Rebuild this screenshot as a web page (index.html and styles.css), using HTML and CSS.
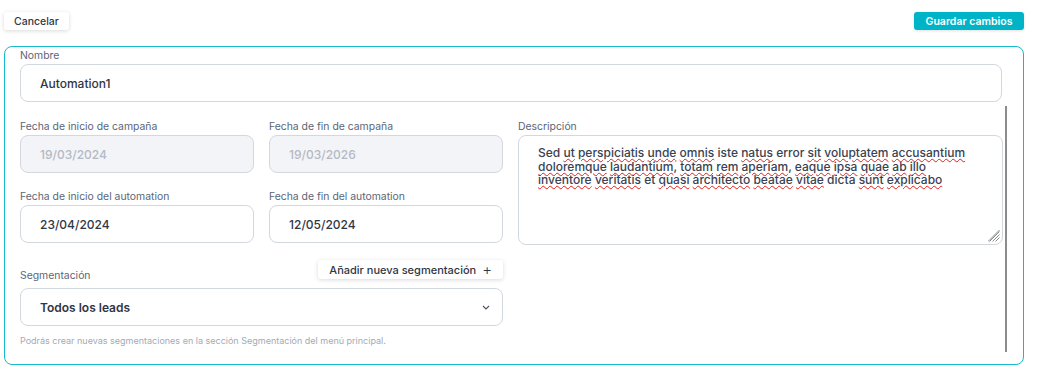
FILE: index.html
```html
<!DOCTYPE html>
<html lang="es">

<head>
    <meta charset="UTF-8">
    <meta name="viewport" content="width=device-width, initial-scale=1.0">
    <title>Editar automation</title>
    <link rel="stylesheet" href="styles.css">
</head>

<body>
    <div class="toolbar">
        <button type="button" class="btn-cancel">Cancelar</button>
        <button type="button" class="btn-save">Guardar cambios</button>
    </div>

    <div class="panel">
        <div class="field">
            <label class="label">Nombre</label>
            <div class="input">Automation1</div>
        </div>

        <div class="scroll-area">
            <div class="grid">
                <div class="left-col">
                    <div class="row">
                        <div class="field">
                            <label class="label">Fecha de inicio de campaña</label>
                            <div class="input disabled">19/03/2024</div>
                        </div>
                        <div class="field">
                            <label class="label">Fecha de fin de campaña</label>
                            <div class="input disabled">19/03/2026</div>
                        </div>
                    </div>
                    <div class="row">
                        <div class="field">
                            <label class="label">Fecha de inicio del automation</label>
                            <div class="input">23/04/2024</div>
                        </div>
                        <div class="field">
                            <label class="label">Fecha de fin del automation</label>
                            <div class="input">12/05/2024</div>
                        </div>
                    </div>
                    <div class="field seg-field">
                        <div class="seg-head">
                            <label class="label">Segmentación</label>
                            <button type="button" class="btn-add">Añadir nueva segmentación <span class="plus">+</span></button>
                        </div>
                        <div class="input select">
                            <span>Todos los leads</span>
                            <svg width="8" height="5" viewBox="0 0 8 5"><path d="M1 1l3 3 3-3" fill="none" stroke="#4a5262" stroke-width="1.1"/></svg>
                        </div>
                        <p class="hint">Podrás crear nuevas segmentaciones en la sección Segmentación del menú principal.</p>
                    </div>
                </div>

                <div class="field right-col">
                    <label class="label">Descripción</label>
                    <div class="textarea">
                        Sed <span class="sp">ut</span> <span class="sp">perspiciatis</span> <span class="sp">unde</span> <span class="sp">omnis</span> iste <span class="sp">natus</span> error <span class="sp">sit</span> <span class="sp">voluptatem</span> <span class="sp">accusantium</span><br>
                        <span class="sp">doloremque</span> <span class="sp">laudantium</span>, <span class="sp">totam</span> <span class="sp">rem</span> <span class="sp">aperiam</span>, <span class="sp">eaque</span> <span class="sp">ipsa</span> <span class="sp">quae</span> <span class="sp">ab</span> <span class="sp">illo</span><br>
                        <span class="sp">inventore</span> <span class="sp">veritatis</span> et <span class="sp">quasi</span> <span class="sp">architecto</span> <span class="sp">beatae</span> <span class="sp">vitae</span> dicta <span class="sp">sunt</span> <span class="sp">explicabo</span>
                        <svg class="grip" width="12" height="12" viewBox="0 0 12 12"><path d="M11.5 1.5L1.5 11.5M11.5 4.5L4.5 11.5M11.5 7.5L7.5 11.5M11.5 0L0 11.5" stroke="#8a8a8a" stroke-width="1"/></svg>
                    </div>
                </div>
            </div>
            <div class="scrollbar"></div>
        </div>
    </div>
</body>

</html>
```

FILE: styles.css
```css
body {
    font-family: Inter, "Noto Sans", sans-serif;
    background-color: #fff;
    margin: 0;
    padding: 12px 14px 0 4px;
    color: #2f3645;
}

.toolbar {
    display: flex;
    justify-content: space-between;
    align-items: center;
    margin-bottom: 16px;
}

.btn-cancel,
.btn-save,
.btn-add {
    font-family: inherit;
    border: none;
    border-radius: 3px;
    cursor: pointer;
}

.btn-cancel {
    background-color: #fff;
    color: #2f3645;
    font-size: 10.5px;
    font-weight: 500;
    height: 18px;
    padding: 0 10px;
    box-shadow: 0 1px 4px rgba(0, 0, 0, 0.15);
}

.btn-save {
    background-color: #00b4c8;
    color: #fff;
    font-size: 10.5px;
    font-weight: 600;
    height: 18px;
    width: 110px;
    padding: 0;
    box-shadow: 0 1px 3px rgba(0, 0, 0, 0.12);
}

.panel {
    border: 1px solid #14b9cc;
    border-radius: 8px;
    padding: 3px 21px 8px 15px;
    height: 306px;
}

.field {
    display: flex;
    flex-direction: column;
}

.label {
    font-size: 10.4px;
    color: #5b6577;
    height: 12px;
    line-height: 12px;
    margin-bottom: 2px;
}

.input {
    height: 36px;
    border: 1px solid #d3d7de;
    border-radius: 8px;
    display: flex;
    align-items: center;
    padding: 0 19px;
    font-size: 12px;
    font-weight: 500;
    color: #2f3645;
    background-color: #fff;
}

.input.disabled {
    background-color: #f3f4f7;
    color: #b3b9c5;
}

.scroll-area {
    display: flex;
    margin-top: 4px;
    margin-right: -5px;
}

.grid {
    flex: 1;
    display: flex;
    gap: 15px;
    padding-top: 15px;
}

.left-col {
    width: 483px;
    display: flex;
    flex-direction: column;
}

.row {
    display: flex;
    gap: 15px;
    margin-bottom: 18px;
}

.row .field {
    flex: 1;
}

.seg-field {
    margin-top: -1px;
}

.seg-head {
    display: flex;
    justify-content: space-between;
    align-items: flex-end;
    margin-bottom: 6px;
}

.seg-head .label {
    margin-bottom: 0;
}

.btn-add {
    background-color: #fff;
    color: #2f3645;
    font-size: 11px;
    font-weight: 500;
    height: 19px;
    padding: 0 11px;
    margin-bottom: 3px;
    box-shadow: 0 1px 4px rgba(0, 0, 0, 0.15);
    display: flex;
    align-items: center;
    gap: 6px;
}

.plus {
    font-size: 15px;
    font-weight: 300;
    line-height: 1;
}

.select {
    justify-content: space-between;
    padding-right: 12px;
    font-weight: 600;
}

.hint {
    font-size: 9px;
    color: #a3aab7;
    margin: 9px 0 0;
}

.right-col {
    flex: 1;
}

.textarea {
    position: relative;
    height: 94px;
    border: 1px solid #d3d7de;
    border-radius: 8px;
    padding: 10px 19px 4px;
    font-size: 12px;
    font-weight: 500;
    line-height: 13.5px;
    color: #3a4252;
}

.sp {
    text-decoration: underline wavy #e0201b;
    text-decoration-thickness: 1px;
    text-underline-offset: 1px;
}

.grip {
    position: absolute;
    right: 2px;
    bottom: 2px;
}

.scrollbar {
    width: 2px;
    background-color: #8c8c8c;
    margin-left: 2px;
    height: 246px;
}
```
